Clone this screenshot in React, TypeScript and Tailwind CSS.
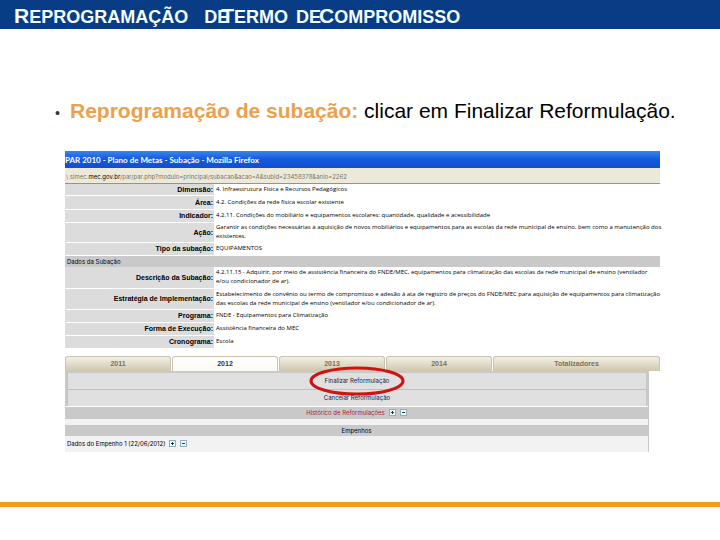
import React from "react";

type Row = { label: string; lines: string[]; height: string };

const generalRows: Row[] = [
  { label: "Dimensão:", lines: ["4. Infraestrutura Física e Recursos Pedagógicos"], height: "h-[11px]" },
  { label: "Área:", lines: ["4.2. Condições da rede física escolar existente"], height: "h-[14px]" },
  {
    label: "Indicador:",
    lines: ["4.2.11. Condições do mobiliário e equipamentos escolares: quantidade, qualidade e acessibilidade"],
    height: "h-[13px]",
  },
  {
    label: "Ação:",
    lines: [
      "Garantir as condições necessárias à aquisição de novos mobiliários e equipamentos para as escolas da rede municipal de ensino, bem como a manutenção dos",
      "existentes.",
    ],
    height: "h-[20px]",
  },
  { label: "Tipo da subação:", lines: ["EQUIPAMENTOS"], height: "h-[13px]" },
];

const detailRows: Row[] = [
  {
    label: "Descrição da Subação:",
    lines: [
      "4.2.11.15 - Adquirir, por meio de assistência financeira do FNDE/MEC, equipamentos para climatização das escolas da rede municipal de ensino (ventilador",
      "e/ou condicionador de ar).",
    ],
    height: "h-[21px]",
  },
  {
    label: "Estratégia de Implementação:",
    lines: [
      "Estabelecimento de convênio ou termo de compromisso e adesão à ata de registro de preços do FNDE/MEC para aquisição de equipamentos para climatização",
      "das escolas da rede municipal de ensino (ventilador e/ou condicionador de ar).",
    ],
    height: "h-[21px]",
  },
  { label: "Programa:", lines: ["FNDE - Equipamentos para Climatização"], height: "h-[13px]" },
  { label: "Forma de Execução:", lines: ["Assistência financeira do MEC"], height: "h-[13px]" },
  { label: "Cronograma:", lines: ["Escola"], height: "h-[13px]" },
];

const tabs = ["2011", "2012", "2013", "2014", "Totalizadores"];

function DataRow({ row }: { row: Row }) {
  return (
    <tr className={`${row.height} border-b border-white`}>
      <th
        scope="row"
        className="bg-[#dcdcdc] p-0 pr-px text-right align-middle font-['Liberation_Sans',Arial,sans-serif] text-[7px] font-bold"
      >
        {row.label}
      </th>
      <td className="p-0 pl-[2px] align-middle font-['Open_Sans','Liberation_Sans',sans-serif]">
        {row.lines.map((line) => (
          <div key={line}>{line}</div>
        ))}
      </td>
    </tr>
  );
}

function Toggle({ sign, label }: { sign: "+" | "-"; label: string }) {
  return (
    <button
      type="button"
      aria-label={label}
      className="flex size-[7px] items-center justify-center border border-[#8fb0ba] bg-[#e9fafa]"
    >
      <svg viewBox="0 0 5 5" className="size-[5px]" stroke="#173c4b" shapeRendering="crispEdges">
        <path d={sign === "+" ? "M1 2.5h3M2.5 1v3" : "M1 2.5h3"} />
      </svg>
    </button>
  );
}

function Browser() {
  return (
    <section className="whitespace-nowrap font-['Inter','Liberation_Sans',sans-serif] text-[6px] leading-[9px] text-black">
      <div className="h-[17px] bg-linear-to-b from-[#3b83ee] via-[#1459dc] to-[#0f50d0] font-['Lato','Liberation_Sans',sans-serif] text-[8px] leading-[18px] font-bold text-white">
        PAR 2010 - Plano de Metas - Subação - Mozilla Firefox
      </div>
      <div className="h-4 border-b border-[#96948a] bg-[#ece9d8] pl-px leading-[17px] text-[#77756c]">
        \ simec.<span className="text-black">mec.gov.br</span>
        /par/par.php?modulo=principal/subacao&amp;acao=A&amp;subid=23458378&amp;anio=2262
      </div>
      <table className="w-full table-fixed border-collapse border-b border-[#bcbcbc]">
        <colgroup>
          <col className="w-[149px]" />
          <col />
        </colgroup>
        <tbody>
          {generalRows.map((row) => (
            <DataRow key={row.label} row={row} />
          ))}
          <tr className="h-[12px]">
            <th colSpan={2} className="bg-[#c9c9c9] p-0 pl-[2px] text-left font-normal">
              Dados da Subação
            </th>
          </tr>
          {detailRows.map((row) => (
            <DataRow key={row.label} row={row} />
          ))}
        </tbody>
      </table>

      <div role="tablist" className="mt-[7px] flex h-[15px] gap-px">
        {tabs.map((tab) => (
          <button
            key={tab}
            type="button"
            role="tab"
            aria-selected={tab === "2012"}
            className={`rounded-t-[3px] border border-b-0 border-[#c9c3b2] bg-linear-to-b font-['Liberation_Sans',Arial,sans-serif] text-[7px] font-bold ${
              tab === "Totalizadores" ? "flex-1" : "w-[106px]"
            } ${
              tab === "2012"
                ? "from-white to-[#fbfaf5] text-[#333]"
                : "from-[#f3f0e6] to-[#cfc7ae] text-[#77725f]"
            }`}
          >
            {tab}
          </button>
        ))}
      </div>

      <div className="mr-[11px] border-r border-[#c9c9c9] bg-[#f2f2f2]">
        <div className="bg-[#c9c9c9] px-[2px] pt-[2px] text-center text-[#0c2450]">
          <div className="flex h-[17px] items-center justify-center border-b border-l border-[#c0c0c0] bg-[#e0e0e0]">
            <a href="#finalizar" className="relative">
              Finalizar Reformulação
              <svg
                viewBox="0 0 96 30"
                className="absolute top-1/2 left-1/2 h-[30px] w-24 max-w-none -translate-x-1/2 -translate-y-1/2"
                fill="none"
                stroke="#d01212"
                strokeWidth="3"
                aria-hidden="true"
              >
                <ellipse cx="48" cy="15" rx="46" ry="13" />
              </svg>
            </a>
          </div>
          <div className="flex h-4 items-center justify-center border-l border-[#c0c0c0] bg-[#e0e0e0]">
            <a href="#cancelar">Cancelar Reformulação</a>
          </div>
        </div>
        <div className="flex h-[13px] items-center justify-center gap-1 border-t border-white bg-[#c9c9c9] text-[#b3202a]">
          <span>Histórico de Reformulações</span>
          <Toggle sign="+" label="Mostrar histórico" />
          <Toggle sign="-" label="Ocultar histórico" />
        </div>
        <div className="mt-[6px] flex h-[11px] items-center justify-center bg-[#c9c9c9]">Empenhos</div>
        <div className="flex h-4 items-center gap-1 pl-[2px]">
          <span>Dados do Empenho 1 (22/06/2012)</span>
          <Toggle sign="+" label="Mostrar empenho" />
          <Toggle sign="-" label="Ocultar empenho" />
        </div>
      </div>
    </section>
  );
}

export default function App() {
  return (
    <div className="flex min-h-screen flex-col bg-white font-['Liberation_Sans',Arial,sans-serif]">
      <header className="h-[29px] overflow-hidden bg-[#083c84] pl-[14px]">
        <h1 className="flex items-baseline text-[18px] leading-[31px] font-bold whitespace-nowrap text-[#f4ffff]">
          <span>
            <span className="text-[21px]">R</span>EPROGRAMAÇÃO
          </span>
          <span className="ml-4">DE</span>
          <span className="-ml-2">
            <span className="text-[21px]">T</span>ERMO
          </span>
          <span className="ml-2">DE</span>
          <span className="-ml-[2px]">
            <span className="text-[21px]">C</span>OMPROMISSO
          </span>
        </h1>
      </header>

      <main className="pr-[60px] pl-[65px]">
        <ul className="-mr-6 -ml-3 pt-[68px]">
          <li className="flex items-baseline text-[21px] leading-7 whitespace-nowrap text-black">
            <span className="w-[17px] pl-[2px] text-[14px] text-[#26384a]">•</span>
            <p>
              <strong className="text-[#eda04c]">Reprogramação de subação:</strong> clicar em Finalizar
              Reformulação.
            </p>
          </li>
        </ul>
        <div className="mt-6">
          <Browser />
        </div>
      </main>

      <footer className="mt-auto pb-[33px]">
        <div className="h-[5px] bg-[#f29d16]" />
      </footer>
    </div>
  );
}
